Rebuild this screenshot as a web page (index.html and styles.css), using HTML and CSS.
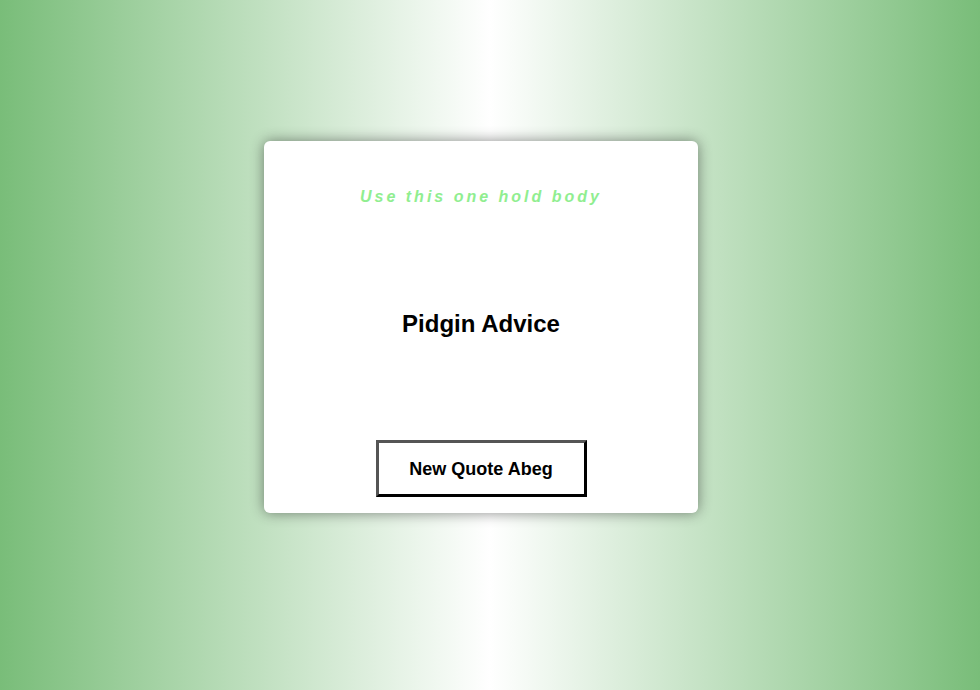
FILE: index.html
```html
<!DOCTYPE html>
<html lang="en">
<head>
<meta charset="utf-8">
<title>Pidgin Advice</title>
<link rel="stylesheet" href="styles.css">
</head>
<body>
<main class="stage">
  <section class="card">
    <p class="tagline">Use this one hold body</p>
    <h1 class="quote">Pidgin Advice</h1>
    <button class="new-quote" type="button">New Quote Abeg</button>
  </section>
</main>
</body>
</html>
```
FILE: styles.css
```css
html, body {
  margin: 0;
  padding: 0;
  height: 100%;
}
body {
  background: linear-gradient(90deg, #79bd79 0%, #ffffff 50%, #79bd79 100%);
  font-family: "Liberation Sans", Arial, sans-serif;
}
.stage {
  box-sizing: border-box;
  height: 100%;
  display: flex;
  align-items: center;
  justify-content: center;
  padding: 0 18px 36px 0;
}
.card {
  box-sizing: border-box;
  width: 434px;
  height: 372px;
  background: #ffffff;
  border-radius: 6px;
  box-shadow: 0 0 14px rgba(0, 0, 0, 0.45);
  display: flex;
  flex-direction: column;
  align-items: center;
  padding: 44px 20px 16px;
}
.tagline {
  margin: 0;
  color: #90ee90;
  font-size: 16px;
  font-weight: bold;
  font-style: italic;
  letter-spacing: 3px;
  line-height: 24px;
}
.quote {
  margin: 0;
  flex: 1;
  display: flex;
  align-items: center;
  font-size: 24px;
  font-weight: bold;
  color: #000;
  padding-bottom: 1px;
}
.new-quote {
  box-sizing: border-box;
  width: 211px;
  height: 57px;
  background: #fff;
  border: 3px solid;
  border-color: #555 #000 #000 #555;
  font-family: "Liberation Sans", Arial, sans-serif;
  font-size: 18px;
  font-weight: bold;
  color: #000;
  padding: 2px 0 0;
}
```
